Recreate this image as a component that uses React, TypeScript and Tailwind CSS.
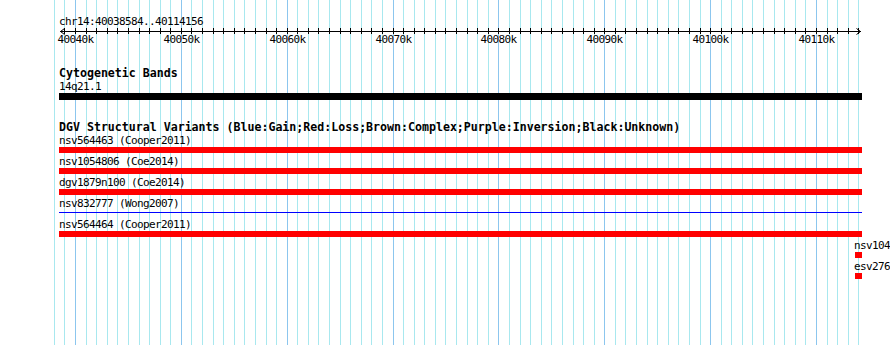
import React from "react";

const START = 40038584;
const END = 40114156;
const X0 = 60;
const W = 800;
const px = (p: number) => Math.round(X0 + ((p - START) * W) / (END - START));

const minorKs: number[] = [];
for (let k = 40038; k <= 40114; k++) minorKs.push(k);
const majorKs = [40040, 40050, 40060, 40070, 40080, 40090, 40100, 40110];

const small = "text-[11px] leading-[13px] tracking-[-0.62px] whitespace-nowrap";
const bold = "text-[11.6px] leading-[13px] font-bold whitespace-nowrap";

type Row = { label: string; kind: "red" | "blue" };
const rows: Row[] = [
  { label: "nsv564463 (Cooper2011)", kind: "red" },
  { label: "nsv1054806 (Coe2014)", kind: "red" },
  { label: "dgv1879n100 (Coe2014)", kind: "red" },
  { label: "nsv832777 (Wong2007)", kind: "blue" },
  { label: "nsv564464 (Cooper2011)", kind: "red" },
];

export default function App() {
  return (
    <div className="relative w-[890px] h-[345px] bg-white overflow-hidden text-black font-['DejaVu_Sans_Mono',monospace]">
      <svg className="absolute inset-0" width={890} height={345}>
        {minorKs.map((k) => {
          const x = px(k * 1000) + 0.5;
          const major = k % 10 === 0;
          return (
            <line
              key={k}
              x1={x}
              x2={x}
              y1={0}
              y2={345}
              stroke={major ? "#8cc6ee" : "#a8e8ef"}
              strokeWidth={1}
            />
          );
        })}
      </svg>

      <div className="relative flex flex-col pt-[15px]">
        <div className={`ml-[59px] ${small}`}>chr14:40038584..40114156</div>

        <div className="relative h-[20px]">
          <svg className="absolute left-0 top-0" width={890} height={8}>
            <line x1={60} x2={861} y1={3.5} y2={3.5} stroke="#000" strokeWidth={1} />
            <polyline points="64.5,0.5 60.5,3.5 64.5,6.5" fill="none" stroke="#000" strokeWidth={1} />
            <polyline points="856.5,0.5 860.5,3.5 856.5,6.5" fill="none" stroke="#000" strokeWidth={1} />
            {minorKs
              .filter((k) => k * 1000 >= START && k * 1000 <= END)
              .map((k) => {
                const x = px(k * 1000) + 0.5;
                return <line key={k} x1={x} x2={x} y1={0} y2={6} stroke="#000" strokeWidth={1} />;
              })}
          </svg>
          {majorKs.map((k) => (
            <div
              key={k}
              className={`absolute top-[5px] -translate-x-1/2 ${small}`}
              style={{ left: px(k * 1000) + 0.5 }}
            >
              {k}k
            </div>
          ))}
        </div>

        <div className="mt-[19px] flex flex-col">
          <div className={`ml-[59px] ${bold}`}>Cytogenetic Bands</div>
          <div className={`ml-[59px] ${small}`}>14q21.1</div>
          <div className="ml-[59px] w-[803px] h-[7px] bg-black" />
        </div>

        <div className="mt-[21px] flex flex-col">
          <div className={`ml-[59px] ${bold}`}>
            DGV Structural Variants (Blue:Gain;Red:Loss;Brown:Complex;Purple:Inversion;Black:Unknown)
          </div>
          <div className="flex flex-col gap-[2px]">
            {rows.map((r) => (
              <div key={r.label} className="flex flex-col">
                <div className={`ml-[59px] ${small}`}>{r.label}</div>
                {r.kind === "red" ? (
                  <div className="ml-[59px] w-[803px] h-[6px] bg-[#ff0000]" />
                ) : (
                  <div className="ml-[59px] w-[803px] h-[6px] pt-[2px]">
                    <div className="h-px bg-[#0000ff]" />
                  </div>
                )}
              </div>
            ))}
            <div className="flex flex-col">
              <div className={`ml-[854px] ${small}`}>nsv104</div>
              <div className="ml-[855px] w-[7px] h-[6px] bg-[#ff0000]" />
            </div>
            <div className="flex flex-col">
              <div className={`ml-[854px] ${small}`}>esv276</div>
              <div className="ml-[855px] w-[7px] h-[6px] bg-[#ff0000]" />
            </div>
          </div>
        </div>
      </div>
    </div>
  );
}
